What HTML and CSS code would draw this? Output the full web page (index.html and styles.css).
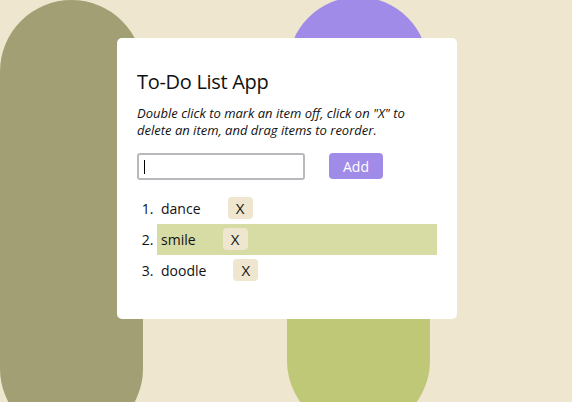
FILE: index.html
```html
<!DOCTYPE html>
<html>
<head>
<meta charset="utf-8">
<link rel="stylesheet" href="styles.css">
</head>
<body>
<div class="bg">
  <div class="blob blob-olive"></div>
  <div class="blob blob-purple"></div>
  <div class="blob blob-green"></div>
</div>
<main class="card">
  <h2 class="title">To-Do List App</h2>
  <p class="hint">Double click to mark an item off, click on "X" to delete an item, and drag items to reorder.</p>
  <form class="add-form">
    <label class="input-wrap">
      <input class="add-input" type="text">
      <span class="caret"></span>
    </label>
    <button class="add-btn" type="button">Add</button>
  </form>
  <ol class="list">
    <li class="item"><span class="item-text">dance</span><button class="del" type="button">X</button></li>
    <li class="item item-done"><span class="item-text">smile</span><button class="del" type="button">X</button></li>
    <li class="item"><span class="item-text">doodle</span><button class="del" type="button">X</button></li>
  </ol>
</main>
</body>
</html>
```
FILE: styles.css
```css
* { box-sizing: border-box; }
html, body { margin: 0; height: 100%; overflow: hidden; }
body {
  background: #efe6cf;
  font-family: "Open Sans", "Liberation Sans", sans-serif;
  color: #111;
  padding: 38px 0 0 2px;
}
.bg { position: absolute; inset: 0; z-index: 0; overflow: hidden; }
.blob { position: absolute; }
.blob-olive {
  left: 0; top: 0; width: 143px; height: 440px;
  border-radius: 72px; background: #a29f74;
}
.blob-purple {
  left: 288px; top: -3px; width: 140px; height: 200px;
  border-radius: 70px; background: #a08be8;
}
.blob-green {
  left: 287px; top: 150px; width: 143px; height: 282px;
  border-radius: 72px; background: #bfc877;
}
.card {
  position: relative; z-index: 1;
  width: 340px; margin: 0 auto;
  background: #fff; border-radius: 5px;
  padding: 30px 20px 20px;
}
.title {
  margin: 0; font-size: 20px; font-weight: 400; line-height: 27px;
  letter-spacing: -0.3px;
}
.hint {
  margin: 10px 0 0; font-size: 13px; font-style: italic; line-height: 17px;
}
.add-form { display: flex; gap: 24px; margin-top: 14px; }
.input-wrap { position: relative; display: block; height: 27px; }
.add-input {
  display: block;
  width: 168px; height: 27px; border: 2px solid #b9b9bd; border-radius: 3px;
  font: inherit; font-size: 14px; padding: 0 4px; outline: none;
}
.caret {
  position: absolute; left: 7px; top: 7px; width: 1px; height: 14px;
  background: #000;
}
.add-btn {
  width: 54px; height: 26px; border: 0; border-radius: 4px;
  background: #a08be8; color: #fff;
  font-family: inherit; font-size: 14px; padding: 0;
}
.list { margin: 13px 0 13px; padding-left: 20px; font-size: 14px; }
.item {
  display: list-item; height: 31px; line-height: 31px; padding-left: 4px;
}
.item-done { background: #d7dba4; }
.del {
  display: inline-block; vertical-align: top;
  width: 25px; height: 22px; margin: 4px 0 0 27px;
  border: 0; border-radius: 4px; background: #efe6cf;
  font-family: inherit; font-size: 15px; line-height: 22px; color: #111; padding: 0;
}
```
